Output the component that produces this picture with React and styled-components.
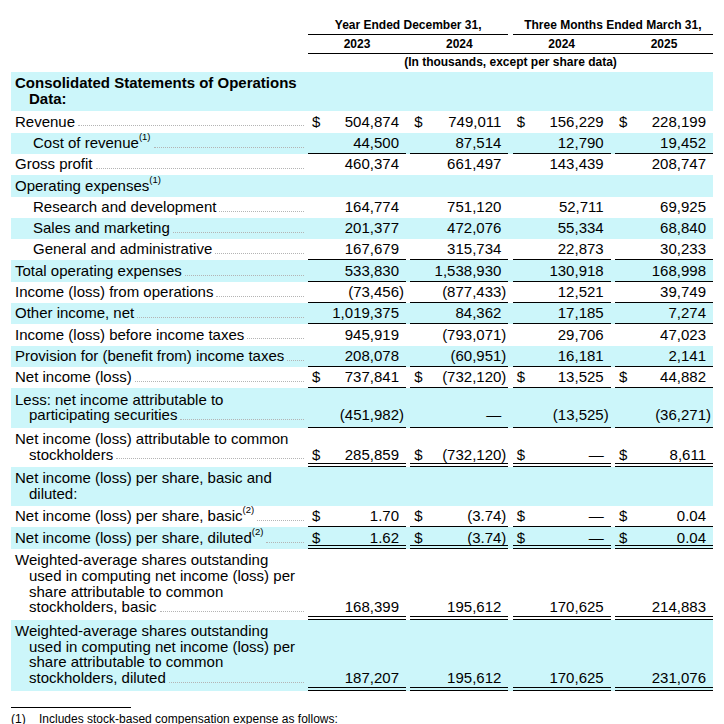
import React from "react";
import styled, { createGlobalStyle, css } from "styled-components";

const SHADE = "#ccf6fa";

const GlobalStyle = createGlobalStyle`
  html, body {
    margin: 0;
    padding: 0;
    background: #fff;
  }
  body {
    font-family: "Liberation Sans", Arial, sans-serif;
    color: #000;
  }
`;

const Page = styled.div`
  width: 702px;
  padding: 18px 0 0 11px;
`;

/* label column plus four amount columns, shared by every row */
const columns = css`
  display: grid;
  grid-template-columns: 1fr repeat(4, 98px);
  column-gap: 4.33px;
`;

const HeadRow = styled.div`
  ${columns};
  font-size: 12px;
  font-weight: bold;
  line-height: 14px;
  text-align: center;
`;

const Period = styled.div`
  grid-column: ${(p) => p.$span};
  padding-bottom: 1.5px;
  border-bottom: 1px solid #000;
`;

const Years = styled.div`
  grid-column: 2 / -1;
  display: grid;
  grid-template-columns: repeat(4, 98px);
  column-gap: 4.33px;
  padding: 2.5px 0 1.8px;
  border-bottom: 1px solid #000;
`;

const Units = styled.div`
  grid-column: 2 / -1;
  padding: 1.5px 0 2.7px;
`;

const Row = styled.div`
  ${columns};
  font-size: 15px;
  line-height: 15.8px;
  background: ${(p) => (p.$shade ? SHADE : "transparent")};
`;

const rowPad = (p) => (p.$multi ? "3.2px 0 4.5px" : "2.3px 0 3.23px");

const Label = styled.div`
  padding: ${rowPad};
  padding-left: ${(p) => (p.$indent ? 22 : 4)}px;
  font-weight: ${(p) => (p.$bold ? "bold" : "normal")};
`;

const LabelLine = styled.div`
  display: flex;
  align-items: flex-end;
  white-space: nowrap;
  padding-left: ${(p) => (p.$cont ? 14 : 0)}px;
`;

const Leader = styled.span`
  flex: 1;
  margin: 0 0 3px 3px;
  border-bottom: 1px dotted #b4b4b4;
`;

const Sup = styled.sup`
  font-size: 9.5px;
  line-height: 0;
  vertical-align: 8px;
`;

const line = "linear-gradient(#000, #000)";

const Value = styled.div`
  display: flex;
  align-items: flex-end;
  padding: ${rowPad};
  padding-left: 4px;
  white-space: nowrap;
  ${(p) =>
    p.$rule === "single" &&
    css`
      background: ${line} left bottom / 100% 1px no-repeat;
    `}
  ${(p) =>
    p.$rule === "double" &&
    css`
      background: ${line} left bottom / 100% 1px no-repeat,
        ${line} left calc(100% - 3px) / 100% 1px no-repeat;
    `}
`;

const Amount = styled.span`
  margin-left: auto;
`;

const Paren = styled.span`
  width: 7px;
`;

const FootRule = styled.div`
  width: 120px;
  height: 1px;
  margin-top: 16.5px;
  background: #000;
`;

const Footnote = styled.div`
  display: flex;
  padding-top: 3.5px;
  font-size: 12px;
  line-height: 14px;
`;

const FootMark = styled.span`
  width: 28px;
`;

const rows = [
  { label: ["Consolidated Statements of Operations", "Data:"], bold: true },
  { label: ["Revenue"], values: ["$504,874", "$749,011", "$156,229", "$228,199"] },
  { label: ["Cost of revenue"], sup: "(1)", indent: true, values: ["44,500", "87,514", "12,790", "19,452"], rule: "single" },
  { label: ["Gross profit"], values: ["460,374", "661,497", "143,439", "208,747"] },
  { label: ["Operating expenses"], sup: "(1)" },
  { label: ["Research and development"], indent: true, values: ["164,774", "751,120", "52,711", "69,925"] },
  { label: ["Sales and marketing"], indent: true, values: ["201,377", "472,076", "55,334", "68,840"] },
  { label: ["General and administrative"], indent: true, values: ["167,679", "315,734", "22,873", "30,233"], rule: "single" },
  { label: ["Total operating expenses"], values: ["533,830", "1,538,930", "130,918", "168,998"], rule: "single" },
  { label: ["Income (loss) from operations"], values: ["(73,456)", "(877,433)", "12,521", "39,749"], rule: "single" },
  { label: ["Other income, net"], values: ["1,019,375", "84,362", "17,185", "7,274"], rule: "single" },
  { label: ["Income (loss) before income taxes"], values: ["945,919", "(793,071)", "29,706", "47,023"] },
  { label: ["Provision for (benefit from) income taxes"], values: ["208,078", "(60,951)", "16,181", "2,141"], rule: "single" },
  { label: ["Net income (loss)"], values: ["$737,841", "$(732,120)", "$13,525", "$44,882"], rule: "single" },
  { label: ["Less: net income attributable to", "participating securities"], values: ["(451,982)", "—", "(13,525)", "(36,271)"], rule: "single" },
  { label: ["Net income (loss) attributable to common", "stockholders"], values: ["$285,859", "$(732,120)", "$—", "$8,611"], rule: "double" },
  { label: ["Net income (loss) per share, basic and", "diluted:"] },
  { label: ["Net income (loss) per share, basic"], sup: "(2)", values: ["$1.70", "$(3.74)", "$—", "$0.04"], rule: "single" },
  { label: ["Net income (loss) per share, diluted"], sup: "(2)", values: ["$1.62", "$(3.74)", "$—", "$0.04"], rule: "double" },
  {
    label: [
      "Weighted-average shares outstanding",
      "used in computing net income (loss) per",
      "share attributable to common",
      "stockholders, basic",
    ],
    values: ["168,399", "195,612", "170,625", "214,883"],
    rule: "double",
  },
  {
    label: [
      "Weighted-average shares outstanding",
      "used in computing net income (loss) per",
      "share attributable to common",
      "stockholders, diluted",
    ],
    values: ["187,207", "195,612", "170,625", "231,076"],
    rule: "double",
  },
];

function parse(v) {
  let text = v;
  const dollar = text.startsWith("$");
  if (dollar) text = text.slice(1);
  const close = text.endsWith(")");
  if (close) text = text.slice(0, -1);
  return { dollar, text, close };
}

function Line({ row, shade }) {
  const multi = row.label.length > 1;
  const last = row.label.length - 1;
  return (
    <Row $shade={shade}>
      <Label $multi={multi} $indent={row.indent} $bold={row.bold}>
        {row.label.map((text, i) => (
          <LabelLine key={i} $cont={i > 0}>
            <span>
              {text}
              {i === last && row.sup && <Sup>{row.sup}</Sup>}
            </span>
            {i === last && row.values && <Leader />}
          </LabelLine>
        ))}
      </Label>
      {(row.values || ["", "", "", ""]).map((v, i) => {
        const { dollar, text, close } = parse(v);
        return (
          <Value key={i} $multi={multi} $rule={row.rule}>
            {dollar && <span>$</span>}
            <Amount>{text}</Amount>
            <Paren>{close ? ")" : ""}</Paren>
          </Value>
        );
      })}
    </Row>
  );
}

export default function App() {
  return (
    <Page>
      <GlobalStyle />
      <HeadRow>
        <Period $span="2 / 4">Year Ended December 31,</Period>
        <Period $span="4 / 6">Three Months Ended March 31,</Period>
      </HeadRow>
      <HeadRow>
        <Years>
          <span>2023</span>
          <span>2024</span>
          <span>2024</span>
          <span>2025</span>
        </Years>
      </HeadRow>
      <HeadRow>
        <Units>(In thousands, except per share data)</Units>
      </HeadRow>
      {rows.map((row, i) => (
        <Line key={i} row={row} shade={i % 2 === 0} />
      ))}
      <FootRule />
      <Footnote>
        <FootMark>(1)</FootMark>
        <span>Includes stock-based compensation expense as follows:</span>
      </Footnote>
    </Page>
  );
}
